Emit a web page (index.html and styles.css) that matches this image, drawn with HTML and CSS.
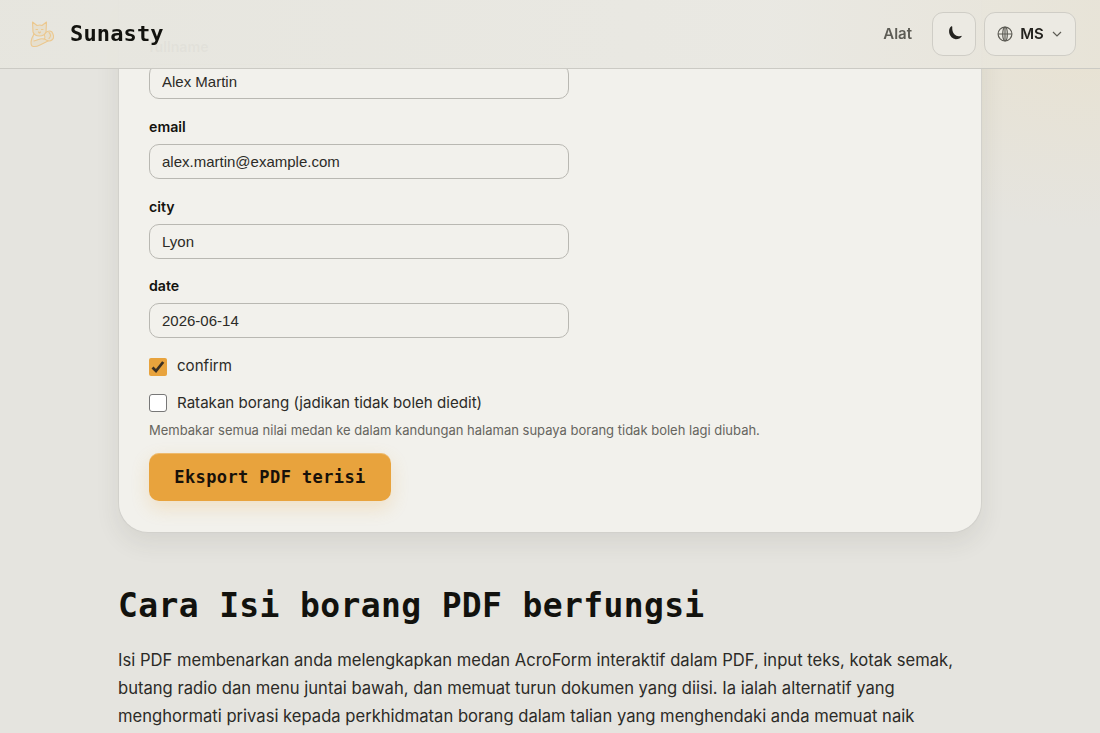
FILE: index.html
```
<!DOCTYPE html>
<html lang="ms">
<head>
    <meta charset="UTF-8">
    <meta name="viewport" content="width=device-width, initial-scale=1.0">
    <title>Isi borang PDF - Sunasty</title>
    <link rel="stylesheet" href="styles.css">
</head>
<body>

    <header class="site-header">
        <a class="brand" href="#">
            <svg class="brand-logo" viewBox="0 0 32 32" fill="#e6dfce" stroke="#ecc88f" stroke-width="1.1" stroke-linejoin="round" stroke-linecap="round">
                <path d="M18.500 17 Q20 21 17 22 M19 15 Q23 11.500 26 14 Q29 19 26.500 21.500 Q24 24 21 22.500 M23 14.500q3 3 0 6"/>
                <path d="M8 16 L6 20 Q4 26 6 28 Q9 29.500 14 27 L22 23 Q18 20 14 21 L8 23"/>
                <path d="M7 14 L6.500 4 L11 7.500 Q14 6.500 16 7.500 L20.500 4 L20 14 Q18.500 18 13.500 18 Q8.500 18 7 14Z"/>
                <path d="M10 11.500h1.500 M15.500 11.500h1.500 M12.500 14l1 1 1-1"/>
            </svg>
            <span class="brand-name">Sunasty</span>
        </a>
        <nav class="nav">
            <a class="nav-link" href="#">Alat</a>
            <button class="nav-button theme" type="button" aria-label="Tema">
                <svg width="16" height="16" viewBox="0 0 16 16">
                    <path d="M4.300 1.300 Q1.500 3.500 2.200 8 Q3.500 13.600 8.800 14.200 Q13 14.200 14.800 11.200 Q14.600 10.600 13.800 10.900 Q10 12 7.600 9.600 Q4.800 6.800 5.300 1.700 Q5.100 0.900 4.300 1.300Z" fill="#24231f"/>
                </svg>
            </button>
            <button class="nav-button lang" type="button">
                <svg width="16" height="16" viewBox="0 0 16 16" fill="none" stroke="#5d5c55" stroke-width="1.200">
                    <circle cx="8" cy="8" r="6.900"/>
                    <ellipse cx="8" cy="8" rx="2.300" ry="6.900"/>
                    <path d="M1.100 8h13.800M8 1.100v13.800"/>
                </svg>
                <span>MS</span>
                <svg class="chevron" width="10" height="10" viewBox="0 0 10 10" fill="none" stroke="#5d5c55" stroke-width="1.200">
                    <path d="M1 3l4 4 4-4"/>
                </svg>
            </button>
        </nav>
    </header>

    <main class="page">
        <form class="card">
            <div class="field">
                <label for="fullname">fullname</label>
                <input type="text" id="fullname" value="Alex Martin">
            </div>
            <div class="field">
                <label for="email">email</label>
                <input type="text" id="email" value="alex.martin@example.com">
            </div>
            <div class="field">
                <label for="city">city</label>
                <input type="text" id="city" value="Lyon">
            </div>
            <div class="field">
                <label for="date">date</label>
                <input type="text" id="date" value="2026-06-14">
            </div>
            <label class="check">
                <span class="box checked">
                    <svg width="18" height="18" viewBox="0 0 18 18" fill="none" stroke="#3b3024" stroke-width="2.800">
                        <path d="M3.500 9.500l3.500 3.500 7.200-9"/>
                    </svg>
                </span>
                <span class="check-text">confirm</span>
            </label>
            <label class="check flatten">
                <span class="box"></span>
                <span>Ratakan borang (jadikan tidak boleh diedit)</span>
            </label>
            <p class="hint">Membakar semua nilai medan ke dalam kandungan halaman supaya borang tidak boleh lagi diubah.</p>
            <button class="export" type="button">Eksport PDF terisi</button>
        </form>

        <section class="about">
            <h2>Cara Isi borang PDF berfungsi</h2>
            <p>Isi PDF membenarkan anda melengkapkan medan AcroForm interaktif dalam PDF, input teks, kotak semak, butang radio dan menu juntai bawah, dan memuat turun dokumen yang diisi. Ia ialah alternatif yang menghormati privasi kepada perkhidmatan borang dalam talian yang menghendaki anda memuat naik</p>
        </section>
    </main>

</body>
</html>
```
FILE: styles.css
```
* {
    box-sizing: border-box;
}
body {
    margin: 0;
    height: 100vh;
    overflow: hidden;
    font-family: Inter, sans-serif;
    color: #2c2b27;
    background: radial-gradient(ellipse 360px 190px at 1100px 40px, #e8e2d2, rgba(232, 226, 210, 0)), #e5e4df;
}
.site-header {
    position: fixed;
    top: 0;
    left: 0;
    right: 0;
    z-index: 10;
    height: 69px;
    padding: 0 24px 1px 26px;
    display: flex;
    align-items: center;
    justify-content: space-between;
    border-bottom: 1px solid #cbcac4;
    background: linear-gradient(to right, rgba(230, 229, 222, 0.975), rgba(233, 232, 226, 0.975) 70%, rgba(231, 227, 216, 0.975));
}
.brand {
    display: flex;
    align-items: center;
    gap: 12px;
    color: #12120e;
    text-decoration: none;
}
.brand-logo {
    width: 32px;
    height: 32px;
}
.brand-name {
    font: bold 22px "DejaVu Sans Mono", monospace;
    letter-spacing: 0.15px;
}
.nav {
    display: flex;
    align-items: center;
}
.nav-link {
    margin-right: 20px;
    font-size: 15px;
    font-weight: 600;
    color: #5d5c55;
    text-decoration: none;
}
.nav-button {
    display: flex;
    align-items: center;
    justify-content: center;
    height: 44px;
    padding: 0;
    border: 1px solid #cfcdc6;
    border-radius: 11px;
    background: #eceae3;
    color: #24231f;
    font: 600 15px Inter, sans-serif;
}
.theme {
    width: 44px;
    padding: 0 0 2px 2px;
    margin-right: 8px;
}
.lang {
    width: 92px;
    gap: 7px;
    padding-right: 1px;
}
.chevron {
    margin-left: 1px;
}
.page {
    width: 864px;
    margin: 0 auto;
}
.card {
    height: 533px;
    padding: 38px 30px 0;
    border: 1px solid #d2d1cc;
    border-top: none;
    border-radius: 0 0 30px 30px;
    background: #f2f1ec;
    box-shadow: 0 10px 24px rgba(60, 58, 40, 0.09);
}
.field {
    width: 420px;
    height: 79.8px;
}
.field label {
    display: block;
    height: 26px;
    font-size: 14.2px;
    font-weight: 600;
    line-height: 18px;
    color: #12120e;
}
.field input {
    display: block;
    width: 100%;
    height: 35px;
    padding: 0 12px;
    border: 1px solid #b9b8b2;
    border-radius: 10px;
    background: transparent;
    color: #2c2b27;
    font: 15px "Liberation Sans", Arial, sans-serif;
}
.check {
    display: flex;
    align-items: center;
    gap: 10px;
    height: 19px;
    font-size: 15.1px;
    line-height: 18px;
}
.check-text {
    margin-bottom: 2px;
}
.flatten {
    height: 18px;
    margin-top: 17.5px;
}
.box {
    width: 18px;
    height: 18px;
    border: 1px solid #777;
    border-radius: 3px;
    background: white;
}
.checked {
    border: none;
    border-radius: 2px;
    background: #e8a33d;
}
.checked svg {
    display: block;
}
.hint {
    margin: 10.5px 0 14px;
    font-size: 13px;
    line-height: 17px;
    color: #66655e;
}
.export {
    display: block;
    width: 242px;
    height: 48px;
    padding: 0;
    border: none;
    border-radius: 10px;
    background: #e8a33d;
    box-shadow: 0 7px 18px rgba(232, 163, 61, 0.22), inset 0 1px 0 rgba(255, 255, 255, 0.25);
    color: #17110a;
    font: bold 17px "DejaVu Sans Mono", monospace;
    letter-spacing: 0.4px;
}
.about h2 {
    margin: 51px 0 18px;
    font: bold 33px/44px "DejaVu Sans Mono", monospace;
    letter-spacing: 0.36px;
    color: #12120e;
}
.about p {
    margin: 0;
    font-size: 16.6px;
    line-height: 28px;
}
```
